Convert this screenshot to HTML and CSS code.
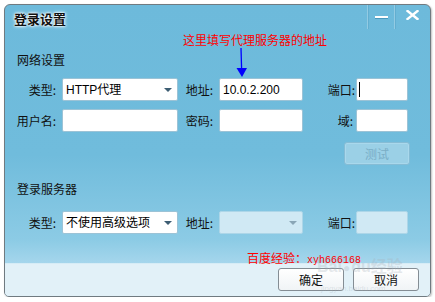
FILE: index.html
```html
<!DOCTYPE html>
<html lang="zh-CN">
<head>
<meta charset="utf-8">
<title>登录设置</title>
<link rel="stylesheet" href="styles.css">
</head>
<body>
<div class="window">
  <div class="titlebar">
    <div class="title">登录设置</div>
    <div class="controls">
      <div class="ctrl min"><span class="dash"></span></div>
      <div class="ctrl close">
        <svg width="13" height="10" viewBox="0 0 13 10"><path d="M1.5 1 L11.5 9 M11.5 1 L1.5 9" stroke="#fff" stroke-width="2.4" stroke-linecap="square"/></svg>
      </div>
    </div>
  </div>

  <div class="note">这里填写代理服务器的地址</div>
  <svg class="arrow" width="14" height="32" viewBox="0 0 14 32"><path d="M6 0 L6.6 21" stroke="#0000ff" stroke-width="1.3"/><path d="M1.5 20 L12 20 L7 29 Z" fill="#0000ff"/></svg>

  <div class="section">网络设置</div>
  <div class="form">
    <div class="lbl">类型:</div>
    <div class="field select"><span class="val">HTTP代理</span><span class="caret"></span></div>
    <div class="lbl">地址:</div>
    <div class="field"><span class="val">10.0.2.200</span></div>
    <div class="lbl tight">端口:</div>
    <div class="field"><span class="cursor"></span></div>

    <div class="lbl">用户名:</div>
    <div class="field"></div>
    <div class="lbl">密码:</div>
    <div class="field"></div>
    <div class="lbl narrow">域:</div>
    <div class="field"></div>
  </div>
  <div class="testrow"><div class="btn disabled">测试</div></div>

  <div class="section second">登录服务器</div>
  <div class="form single">
    <div class="lbl">类型:</div>
    <div class="field select"><span class="val">不使用高级选项</span><span class="caret"></span></div>
    <div class="lbl">地址:</div>
    <div class="field select off"><span class="caret"></span></div>
    <div class="lbl tight">端口:</div>
    <div class="field off"></div>
  </div>

  <div class="footer">
    <div class="btn">确定</div>
    <div class="btn">取消</div>
  </div>

  <div class="wm-logo">Bai<span class="paw">●</span>du经验<div class="wm-url">jingyan.baidu.com</div></div>
  <div class="wm-red">百度经验：<span class="mono">xyh666168</span></div>
</div>
</body>
</html>
```
FILE: styles.css
```css
html, body {
  margin: 0;
  padding: 0;
  background: #ffffff;
}
body {
  font-family: "Liberation Sans", "Noto Sans CJK SC", sans-serif;
  font-size: 12px;
  color: #111;
}
.window {
  position: relative;
  margin: 4px 0 0 4px;
  width: 427px;
  height: 293px;
  box-sizing: border-box;
  border: 1px solid #707a80;
  border-radius: 6px 6px 5px 5px;
  background: linear-gradient(to bottom, #6dbadb 0px, #70bcdc 150px, #8ccbe5 235px, #a5d6ec 258px);
  display: flex;
  flex-direction: column;
  overflow: hidden;
  box-shadow: 1px 1px 2px rgba(0,0,0,0.25);
}
.titlebar {
  height: 24px;
  display: flex;
  justify-content: space-between;
}
.title {
  padding: 6px 0 0 9px;
  font-size: 13px;
  line-height: 16px;
  font-weight: bold;
  font-family: "Noto Sans CJK SC", sans-serif;
  color: #111;
  text-shadow: 0 0 2px #fff, 0 0 3px #fff, 0 0 4px #e8f6ff;
}
.controls {
  display: flex;
  height: 24px;
}
.ctrl {
  display: flex;
  align-items: center;
  justify-content: center;
  border-left: 1px solid #93cbe3;
  box-shadow: inset 1px 0 0 #62aed0;
}
.ctrl.min {
  width: 26px;
}
.ctrl.close {
  width: 36px;
  align-items: flex-start;
  padding-top: 5px;
  box-sizing: border-box;
}
.dash {
  display: block;
  width: 13px;
  height: 2px;
  background: #fff;
  box-shadow: 0 1px 0 #4a98bc;
}
.note {
  position: absolute;
  left: 178px;
  top: 27px;
  font-family: "Noto Sans CJK SC", sans-serif;
  font-size: 12px;
  line-height: 16px;
  color: #ff0000;
}
.arrow {
  position: absolute;
  left: 230px;
  top: 43px;
}
.section {
  padding-left: 12px;
  margin-top: 23px;
  font-family: "Noto Sans CJK SC", sans-serif;
  font-size: 12px;
  line-height: 16px;
  color: #111;
}
.section.second {
  margin-top: 16px;
}
.form {
  display: grid;
  grid-template-columns: 57px 116px 41px 84px 53px 52px;
  grid-auto-rows: 23px;
  row-gap: 8px;
  margin-top: 10px;
}
.form.single {
  margin-top: 14px;
}
.lbl {
  text-align: right;
  padding-right: 6px;
  font-family: "Noto Sans CJK SC", sans-serif;
  font-size: 12px;
  line-height: 23px;
  color: #111;
}
.lbl.tight {
  padding-right: 1px;
}
.lbl.narrow {
  padding-right: 3px;
}
.field {
  position: relative;
  box-sizing: border-box;
  background: #ffffff;
  border: 1px solid #9cc3d6;
  border-radius: 2px;
  display: flex;
  align-items: center;
  padding-left: 3px;
}
.field.off {
  background: #d0e9f4;
  border-color: #add6e8;
}
.val {
  font-size: 12px;
  line-height: 16px;
  color: #000;
  white-space: nowrap;
}
.caret {
  position: absolute;
  right: 5px;
  top: 9px;
  width: 0;
  height: 0;
  border-left: 4.5px solid transparent;
  border-right: 4.5px solid transparent;
  border-top: 4px solid #3d5d73;
}
.off .caret {
  border-top-color: #8aa6b6;
}
.cursor {
  display: block;
  width: 1px;
  height: 15px;
  margin-left: -1px;
  background: #000;
}
.testrow {
  display: flex;
  justify-content: flex-end;
  padding-right: 20px;
  margin-top: 10px;
}
.btn {
  width: 66px;
  height: 23px;
  box-sizing: border-box;
  border: 1px solid #848d94;
  border-radius: 3px;
  background: linear-gradient(to bottom, #ffffff, #f0f4f6);
  display: flex;
  align-items: center;
  justify-content: center;
  font-family: "Noto Sans CJK SC", sans-serif;
  font-size: 12px;
  color: #111;
}
.btn.disabled {
  background: #9bd0e6;
  border-color: #86bcd5;
  color: #7aaec6;
  box-shadow: inset 0 0 0 1px #a9d8ec;
}
.footer {
  margin-top: auto;
  height: 33px;
  box-sizing: border-box;
  background: #e2f1f8;
  border-top: 1px solid #d6ecf6;
  display: flex;
  justify-content: flex-end;
  gap: 9px;
  padding: 4px 11px 0 0;
}
.wm-logo {
  position: absolute;
  left: 312px;
  top: 252px;
  font-family: "Liberation Sans", "Noto Sans CJK SC", sans-serif;
  font-size: 16px;
  font-weight: bold;
  line-height: 20px;
  color: rgba(165, 175, 185, 0.3);
  white-space: nowrap;
  pointer-events: none;
}
.paw {
  font-size: 12px;
  margin: 0 1px;
}
.wm-url {
  font-size: 8px;
  line-height: 10px;
  font-weight: normal;
  margin: 6px 0 0 4px;
}
.wm-red {
  position: absolute;
  left: 242px;
  top: 245px;
  font-family: "Noto Sans CJK SC", sans-serif;
  font-size: 12px;
  line-height: 16px;
  color: #ff0000;
  white-space: nowrap;
}
.mono {
  font-family: "Liberation Mono", monospace;
  font-size: 10px;
}
```
